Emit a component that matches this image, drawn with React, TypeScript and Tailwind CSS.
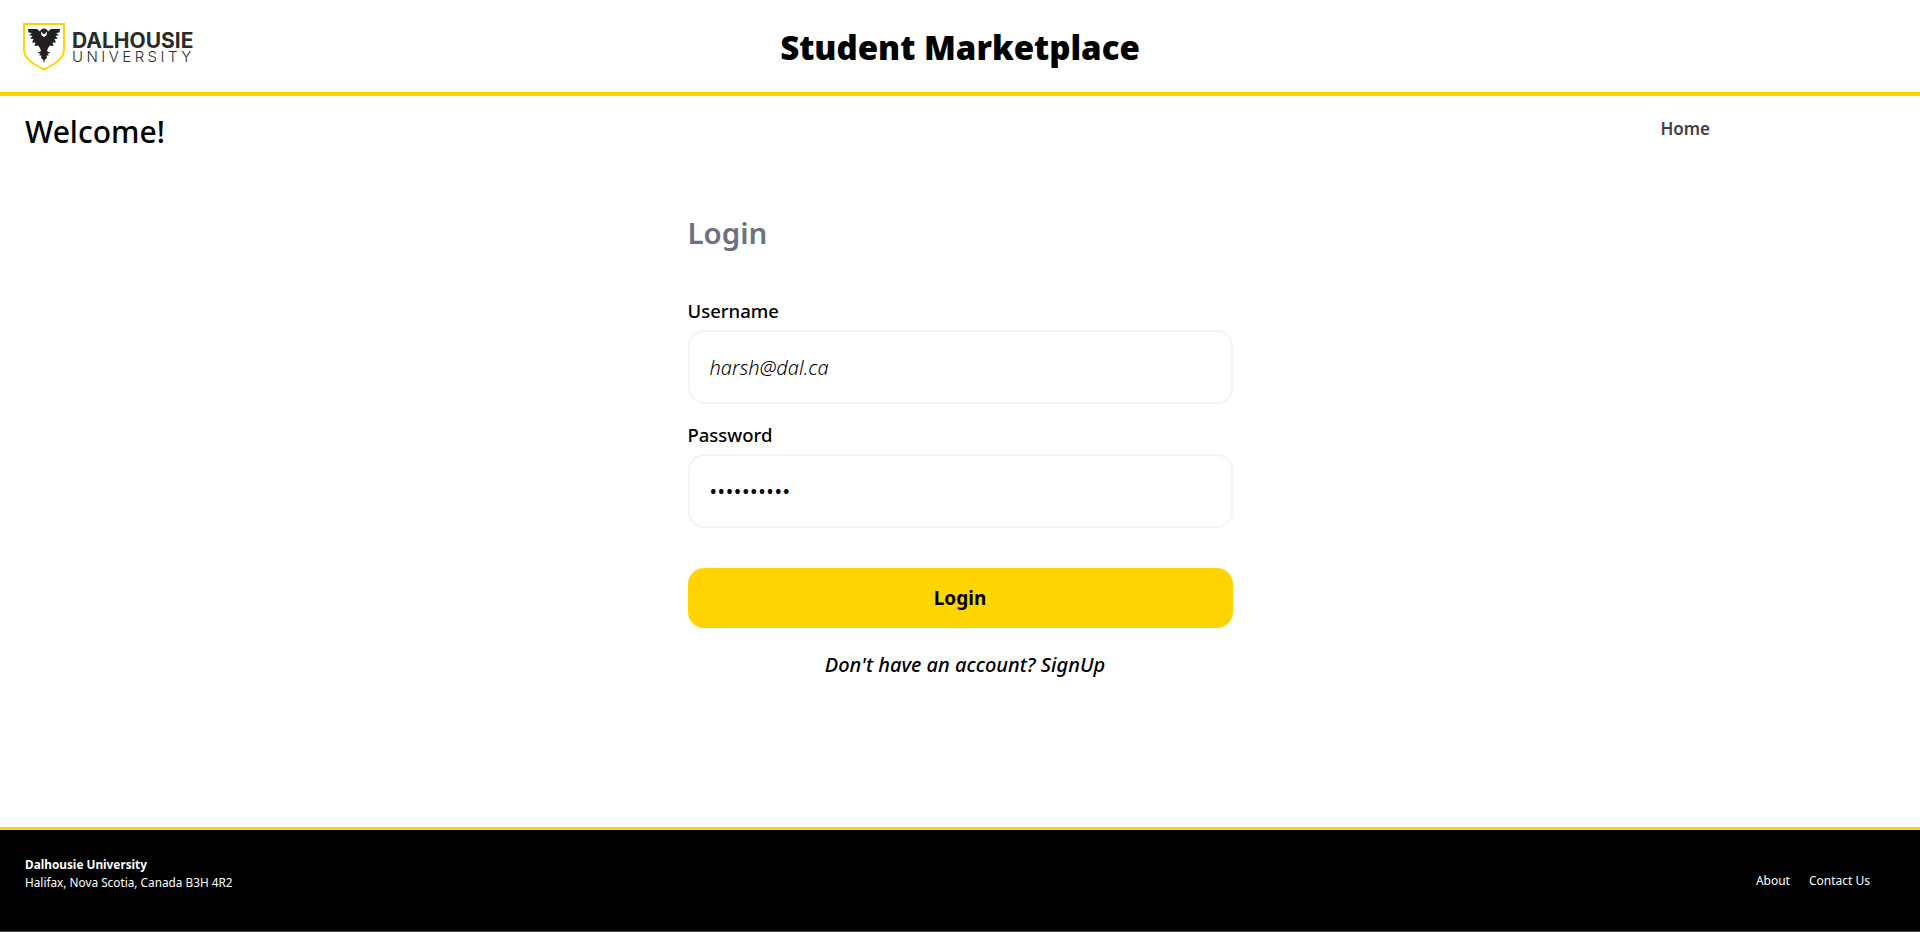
const fontStack = "font-['Noto_Sans','Open_Sans',sans-serif]";

function Logo() {
  return (
    <div className="flex items-center gap-[6px]">
      <svg width="43" height="48" viewBox="0 0 43 48" className="shrink-0">
        <path d="M1 1H41V27C41 36 30 42 21 46.5C12 42 1 36 1 27Z" fill="#fff" stroke="#FFD400" strokeWidth="2" />
        <path
          d="M5 6H14L17 8.5C17.5 6.5 19 5.5 21 5.5C23 5.5 24.5 6.500 25 8.5L28 6H37L36.5 9.500L33 10L36 12L32.500 13L35 15.500L31.500 16L33 19.500L29.500 19.500L30.500 23L27 22.500L25 25L24 28L27.500 30L24.500 30.500L26 32.500L23.500 32.500L24 35L22 36.500L21 40L20 36.500L18 35L18.500 32.500L16 32.500L17.500 30.500L14.500 30L18 28L17 25L15 22.500L11.500 23L12.500 19.500L9 19.500L10.500 16L7 15.500L9.500 13L6 12L9 10L5.500 9.500Z"
          fill="#231f20"
        />
        <path d="M18 8.5L21 11.5L24 8.5L23.5 12.5L21 14L18.5 12.5Z" fill="#fff" />
      </svg>
      <div className="mt-[2px] flex flex-col font-['Inter',sans-serif] text-[#2b2b2b]">
        <span className="text-[21px] leading-[17px] font-bold">DALHOUSIE</span>
        <span className="text-[15px] leading-[16px] font-light tracking-[3.45px]">UNIVERSITY</span>
      </div>
    </div>
  );
}

function Field({ label, value, type }: { label: string; value: string; type: string }) {
  return (
    <div className="flex flex-col">
      <label className="mb-[7px] text-[18.5px] leading-[25px] font-medium text-black">{label}</label>
      <input
        readOnly
        type={type}
        value={value}
        className={
          type === "password"
            ? "h-[74px] w-full rounded-[16px] border-2 border-[#f3f4f6] bg-white px-[20px] pt-[1px] text-[20px] tracking-[0.6px] text-black outline-none"
            : "h-[74px] w-full rounded-[16px] border-2 border-[#f3f4f6] bg-white px-[20px] text-[20px] font-light text-black italic outline-none"
        }
      />
    </div>
  );
}

export default function App() {
  return (
    <div className={`flex h-[932px] flex-col bg-white ${fontStack}`}>
      <header className="relative flex h-[96px] shrink-0 items-center justify-center border-b-4 border-[#FFD400] pt-[3px]">
        <div className="absolute top-[23px] left-[23px]">
          <Logo />
        </div>
        <h1 className="text-[33px] font-black text-black">Student Marketplace</h1>
      </header>

      <div className="flex shrink-0 items-start justify-between pt-[16px] pl-[25px]">
        <h2 className="text-[30px] leading-[40px] font-medium text-black">Welcome!</h2>
        <nav className="mr-[210px] pt-[5px] text-[17px] leading-[24px] font-semibold text-[#3f3f46]">Home</nav>
      </div>

      <main className="flex flex-1 flex-col items-center">
        <form className="mt-[61px] w-[545px]">
          <h3 className="mb-[45px] text-[29.5px] leading-[40px] font-semibold text-[#6b7280]">Login</h3>
          <div className="flex flex-col gap-[18px]">
            <Field label="Username" value="harsh@dal.ca" type="text" />
            <Field label="Password" value="harsh12345" type="password" />
          </div>
          <button
            type="button"
            className="mt-[40px] h-[60px] w-full rounded-[16px] bg-[#FFD400] text-[19px] font-bold text-black"
          >
            Login
          </button>
          <p className="mt-[24px] pl-[10px] text-center text-[20px] leading-[25px] font-medium text-black italic">
            Don't have an account? SignUp
          </p>
        </form>
      </main>

      <footer className="flex h-[105px] shrink-0 items-center justify-between border-t-[3px] border-b border-t-[#FFD400] border-b-[#444444] bg-black pr-[50px] pl-[25px] text-white">
        <div className="mb-[16px] text-[11.8px] leading-[18px]">
          <p className="font-bold">Dalhousie University</p>
          <p>Halifax, Nova Scotia, Canada B3H 4R2</p>
        </div>
        <div className="flex gap-[19px] text-[12px]">
          <a>About</a>
          <a>Contact Us</a>
        </div>
      </footer>
    </div>
  );
}
